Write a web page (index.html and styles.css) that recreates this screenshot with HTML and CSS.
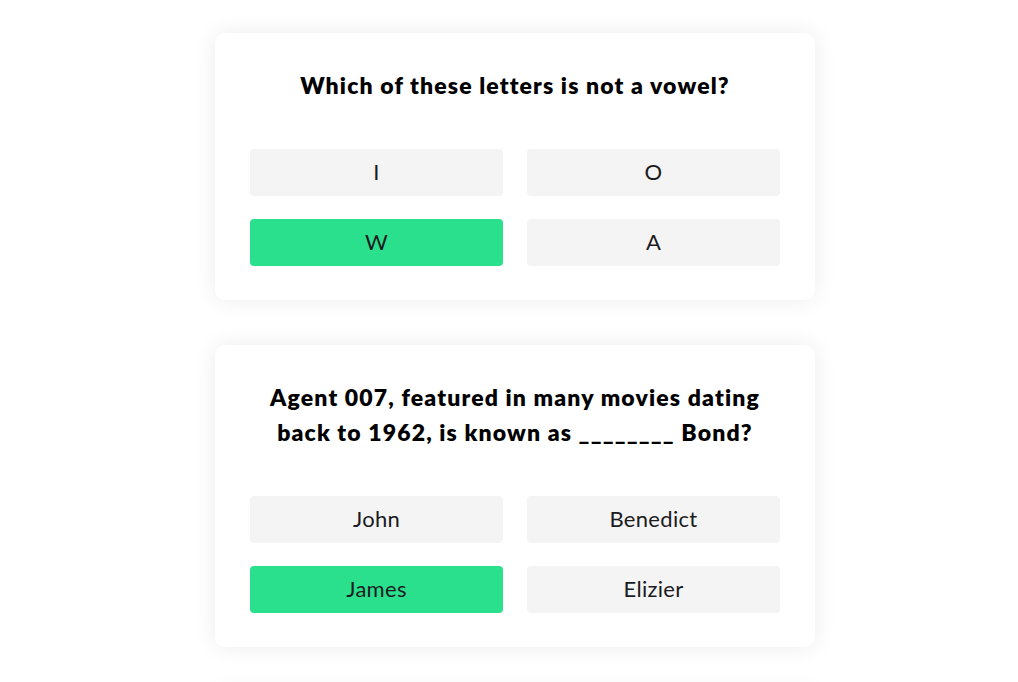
FILE: index.html
```html
<!DOCTYPE html>
<html>
<head>
<meta charset="utf-8">
<link rel="stylesheet" href="styles.css">
</head>
<body>
<main class="quiz">
  <section class="card">
    <h2 class="question">Which of these letters is not a vowel?</h2>
    <div class="answers">
      <button class="answer">I</button>
      <button class="answer">O</button>
      <button class="answer correct">W</button>
      <button class="answer">A</button>
    </div>
  </section>
  <section class="card">
    <h2 class="question">Agent 007, featured in many movies dating<br>back to 1962, is known as ________ Bond?</h2>
    <div class="answers">
      <button class="answer">John</button>
      <button class="answer">Benedict</button>
      <button class="answer correct">James</button>
      <button class="answer">Elizier</button>
    </div>
  </section>
  <section class="card card-next"></section>
</main>
</body>
</html>
```
FILE: styles.css
```css
html, body {
  margin: 0;
  padding: 0;
  background: #ffffff;
}
body {
  font-family: Lato, "Open Sans", sans-serif;
  color: #111;
}
.quiz {
  display: flex;
  flex-direction: column;
  align-items: center;
  gap: 45px;
  padding: 33px 0 40px 12px;
}
.card {
  width: 600px;
  box-sizing: border-box;
  background: #fff;
  border-radius: 10px;
  box-shadow: 0 0 22px rgba(0, 0, 0, 0.08);
  padding: 35px 35px 34px;
}
.card-next {
  height: 267px;
}
.question {
  margin: 0 0 46px;
  text-align: center;
  font-size: 23px;
  line-height: 35px;
  font-weight: 800;
  letter-spacing: 1.15px;
  color: #000;
}
.answers {
  display: grid;
  grid-template-columns: 1fr 1fr;
  column-gap: 24px;
  row-gap: 23px;
}
.answer {
  height: 47px;
  border: none;
  border-radius: 4px;
  background: #f4f4f4;
  font-family: Lato, "Open Sans", sans-serif;
  font-size: 22px;
  font-weight: 400;
  letter-spacing: 0.3px;
  color: #1b1b22;
  padding: 0 0 2px;
}
.answer.correct {
  background: #2be08c;
}
```
